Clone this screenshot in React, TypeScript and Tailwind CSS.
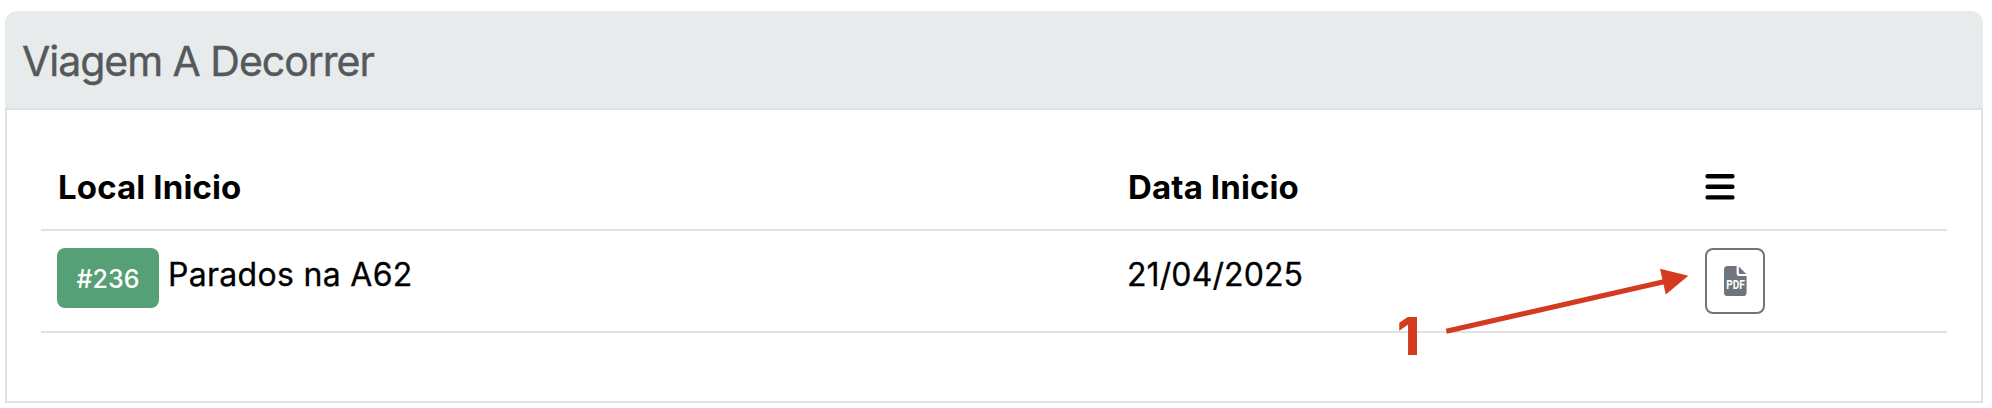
const FilePdfIcon = () => (
  <svg viewBox="0 0 23 30" className="h-[30px] w-[23px] shrink-0 overflow-visible" fill="#6f747d">
    <path d="M3.6 0H12.6V7.2Q12.6 10 15.4 10H22.6V26.4Q22.6 30 19 30H3.6Q0 30 0 26.4V3.6Q0 0 3.6 0Z" />
    <path d="M14.8 0.6L22.2 8H15.8Q14.8 8 14.8 7Z" />
    <text
      x="2.2"
      y="22.8"
      fill="#fff"
      fontSize="13.4"
      fontWeight="700"
      fontFamily="Roboto, sans-serif"
      textLength="18.6"
      lengthAdjust="spacingAndGlyphs"
    >
      PDF
    </text>
  </svg>
);

const MenuIcon = () => (
  <svg viewBox="0 0 30 26" className="h-[26px] w-[30px]" stroke="#000" strokeWidth="4.4" strokeLinecap="round">
    <path d="M2.6 2.3H27.4M2.6 12.8H27.4M2.6 23.4H27.4" />
  </svg>
);

const columns = "grid grid-cols-[1070px_579px_1fr] border-b-2 border-[#dee2e6]";
const heading = "pt-[13px] pl-[17px] text-[33px] leading-[48px] font-bold tracking-[0.13px]";

export default function App() {
  return (
    <div className="relative h-[408px] w-[1992px] overflow-hidden bg-white pt-[11px] pl-[5px] font-['Inter',sans-serif] text-black">
      <div className="h-[392px] w-[1978px]">
        <div className="h-[99px] rounded-t-xl border-b-2 border-[#dee2e6] bg-[#e7ebec] pt-[26px] pl-[17px]">
          <h4 className="w-fit text-[41px] leading-[48px] font-normal tracking-[-1.02px] whitespace-nowrap text-[#55595c] [-webkit-text-stroke:0.4px_#55595c]">
            Viagem A Decorrer
          </h4>
        </div>
        <div className="h-[293px] border-2 border-t-0 border-[#dee2e6] px-[34px] pt-[40px]">
          <div className={columns + " h-[81px]"}>
            <div className={heading}>Local Inicio</div>
            <div className={heading}>Data Inicio</div>
            <div className="pt-[24px] pl-[15px]">
              <MenuIcon />
            </div>
          </div>
          <div className={columns + " h-[102px]"}>
            <div className="flex pt-[17px] pl-4">
              <span className="flex h-[60px] w-[102px] items-center justify-center rounded-lg bg-[#56a077] text-[25px] font-medium text-white">
                <span className="pt-[3px]">#236</span>
              </span>
              <span className="pt-[3px] pl-[9px] text-[32px] leading-[48px] tracking-[0.3px] [-webkit-text-stroke:0.3px_#000]">
                Parados na A62
              </span>
            </div>
            <div className="pt-[20px] pl-4 text-[32px] leading-[48px] tracking-[0.1px] [-webkit-text-stroke:0.3px_#000]">
              21/04/2025
            </div>
            <div className="pt-[17px] pl-[15px]">
              <button className="flex h-[66px] w-[60px] items-center justify-center rounded-lg border-2 border-[#6f747d]">
                <FilePdfIcon />
              </button>
            </div>
          </div>
        </div>
      </div>
      <span className="absolute top-[306px] left-[1397px] text-[52px] leading-[62px] font-extrabold text-[#d33a20]">1</span>
      <svg className="absolute top-[260px] left-[1440px] h-[80px] w-[255px]" viewBox="1440 260 255 80">
        <path d="M1446.3 331.3L1666 281.3" stroke="#d33a20" strokeWidth="5" />
        <path d="M1688.3 275.8L1660 268.7L1665.8 294.5Z" fill="#d33a20" />
      </svg>
    </div>
  );
}
